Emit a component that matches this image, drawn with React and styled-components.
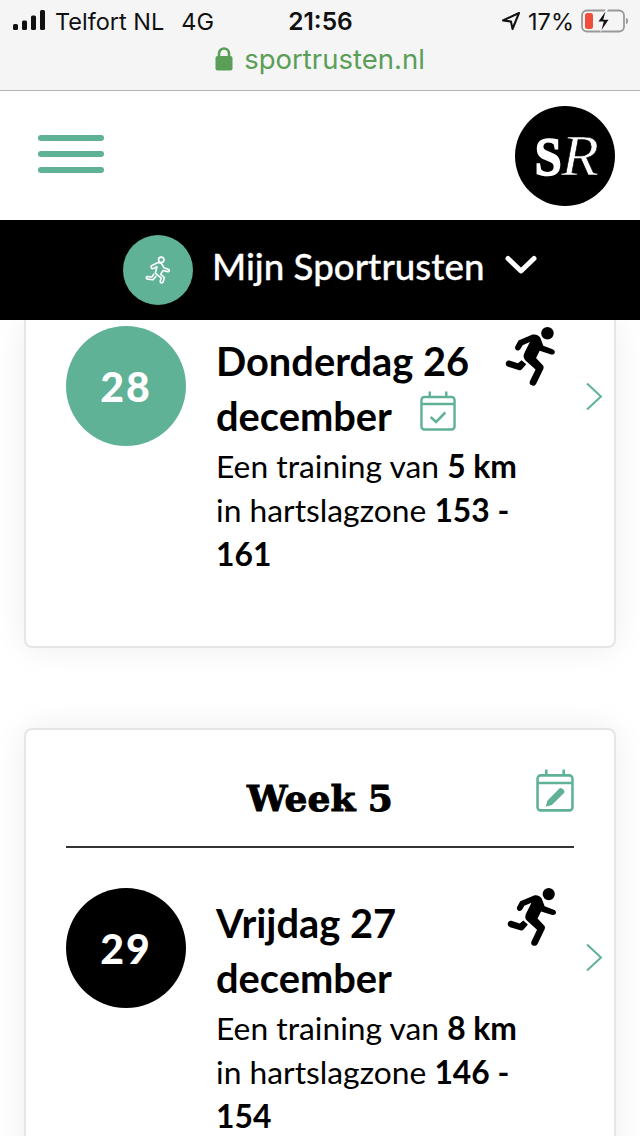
import styled, { createGlobalStyle } from "styled-components";

const GlobalStyle = createGlobalStyle`
  html, body { margin: 0; padding: 0; background: #fff; }
  * { box-sizing: border-box; }
`;

const GREEN = "#60b297";

const Page = styled.div`
  width: 640px;
  height: 1136px;
  overflow: hidden;
  display: flex;
  flex-direction: column;
  font-family: Lato, "Liberation Sans", sans-serif;
  color: #000;
`;

const Chrome = styled.div`
  height: 91px;
  flex: none;
  background: #f5f5f5;
  border-bottom: 1px solid #b4b4b4;
  font-family: Inter, "Liberation Sans", Arial, sans-serif;
`;

const StatusBar = styled.div`
  height: 42px;
  padding: 0 12px 0 13px;
  display: grid;
  grid-template-columns: 1fr auto 1fr;
  align-items: center;
  font-size: 23.5px;
  color: #111;
`;

const StatusLeft = styled.div`
  display: flex;
  align-items: center;
  gap: 8px;
`;

const Carrier = styled.span`
  margin-right: 9px;
`;

const Clock = styled.span`
  font-weight: 600;
  font-size: 24.500px;
`;

const StatusRight = styled.div`
  display: flex;
  align-items: center;
  justify-content: flex-end;
  gap: 7px;
`;

const Address = styled.div`
  display: flex;
  justify-content: center;
  align-items: center;
  gap: 11px;
  font-size: 27.500px;
  line-height: 34px;
  color: #5a9e58;
`;

const Header = styled.header`
  height: 129px;
  flex: none;
  padding: 15px 25px 0 38px;
  display: flex;
  justify-content: space-between;
  align-items: flex-start;
`;

const Burger = styled.div`
  margin-top: 29px;
  width: 66px;
  display: flex;
  flex-direction: column;
  gap: 10px;
`;

const BurgerLine = styled.span`
  height: 6px;
  border-radius: 3px;
  background: ${GREEN};
`;

const Logo = styled.div`
  width: 100px;
  height: 100px;
  border-radius: 50%;
  background: #000;
  color: #fff;
  display: flex;
  align-items: center;
  justify-content: center;
  line-height: 1;
`;

const LogoS = styled.span`
  display: inline-block;
  font-family: "Liberation Serif", serif;
  font-weight: 700;
  font-size: 55px;
  -webkit-text-stroke: 1.6px #fff;
  transform: scaleX(0.88);
`;

const LogoR = styled.span`
  display: inline-block;
  font-family: "Liberation Serif", serif;
  font-style: italic;
  font-size: 56px;
  margin-left: 0;
  -webkit-text-stroke: 0.6px #000;
  transform: scaleX(1.1);
`;

const MenuBar = styled.nav`
  height: 100px;
  flex: none;
  background: #000;
  color: #fff;
  display: flex;
  align-items: center;
  padding-left: 123px;
  position: relative;
  z-index: 1;
`;

const MenuBadge = styled.div`
  width: 70px;
  height: 70px;
  border-radius: 50%;
  background: ${GREEN};
  display: flex;
  align-items: center;
  justify-content: center;
  margin-right: 19px;
`;

const MenuTitle = styled.span`
  font-size: 36.700px;
  font-weight: 500;
  margin: 0 21px 8px 0;
  -webkit-text-stroke: 0.3px #fff;
`;

const MenuChevron = styled.span`
  display: flex;
  margin-bottom: 10px;
`;

const Feed = styled.main`
  flex: 1;
  overflow: hidden;
  padding: 0 24px;
  display: flex;
  flex-direction: column;
  gap: 80px;
  background: #fff;
`;

const Card = styled.section`
  flex: none;
  background: #fff;
  border: 2px solid #e6e6e6;
  border-top: ${(p) => (p.$cut ? "none" : "2px solid #e6e6e6")};
  border-radius: ${(p) => (p.$cut ? "0 0 8px 8px" : "8px")};
  box-shadow: 0 0 34px rgba(0, 0, 0, 0.07);
  padding: ${(p) => (p.$cut ? "6px 0 0" : "0 0 60px")};
  height: ${(p) => (p.$cut ? "328px" : "auto")};
`;

const WeekHead = styled.div`
  margin: 0 40px;
  height: 118px;
  border-bottom: 2px solid #333;
  display: flex;
  align-items: center;
  justify-content: center;
  position: relative;
`;

const WeekTitle = styled.h2`
  margin: 19px 0 0;
  font-family: "DejaVu Serif", "Liberation Serif", serif;
  font-size: 36px;
  font-weight: 700;
  line-height: 1;
  -webkit-text-stroke: 1px #000;
`;

const WeekEdit = styled.div`
  position: absolute;
  right: 0;
  top: 39px;
  display: flex;
`;

const Day = styled.div`
  display: grid;
  grid-template-columns: 120px 1fr;
  column-gap: 30px;
  padding: 0 0 0 40px;
  position: relative;
  margin-top: ${(p) => (p.$spaced ? "40px" : "0")};
`;

const DayCircle = styled.div`
  width: 120px;
  height: 120px;
  border-radius: 50%;
  background: ${(p) => (p.$dark ? "#000" : GREEN)};
  color: #fff;
  display: flex;
  align-items: center;
  justify-content: center;
  font-size: 41px;
  font-weight: 900;
  letter-spacing: 2px;
`;

const DayText = styled.div`
  width: 310px;
  padding-top: 7px;
`;

const DayTitle = styled.h3`
  margin: 0;
  font-size: 39.800px;
  line-height: 55px;
  font-weight: 700;
`;

const TitleIcon = styled.span`
  display: inline-block;
  vertical-align: 0;
  margin: -12px 0 -12px 28px;
  line-height: 0;
`;

const DayBody = styled.p`
  margin: 1px 0 0;
  font-size: 31.800px;
  line-height: 44px;
  width: 310px;
`;

const Runner = styled.div`
  position: absolute;
  left: ${(p) => p.$left}px;
  top: ${(p) => p.$top}px;
  line-height: 0;
`;

const Chevron = styled.div`
  position: absolute;
  right: 11px;
  top: ${(p) => p.$top}px;
  line-height: 0;
`;

const SignalIcon = () => (
  <svg width="34" height="22" viewBox="0 0 34 22">
    <rect x="0" y="14" width="5" height="6" rx="1.5" fill="#111" />
    <rect x="9" y="10.5" width="5" height="9.5" rx="1.5" fill="#111" />
    <rect x="18" y="5.5" width="5" height="14.5" rx="1.5" fill="#111" />
    <rect x="27" y="0" width="5" height="20" rx="1.5" fill="#111" />
  </svg>
);

const LocationIcon = () => (
  <svg width="20" height="20" viewBox="0 0 20 20">
    <path d="M18 2 L2 9.5 L10 10.5 L11.5 18 Z" fill="none" stroke="#111" strokeWidth="2" strokeLinejoin="round" />
  </svg>
);

const BatteryIcon = () => (
  <svg width="47" height="24" viewBox="0 0 47 24">
    <rect x="1" y="1.5" width="42" height="21" rx="5" fill="none" stroke="#999" strokeWidth="1.8" />
    <rect x="4" y="4" width="8" height="16" rx="2.5" fill="#ee4e3a" />
    <path d="M45 9 a2 3 0 0 1 0 6 Z" fill="#999" />
    <path d="M25 0 L16 13 H22 L19 24 L29 10 H23 L27 0 Z" fill="#f5f5f5" />
    <path d="M24.500 2.500 L17.500 12.500 H22.800 L20.500 21 L27.500 10.800 H22.200 Z" fill="#111" />
  </svg>
);

const LockIcon = () => (
  <svg width="18" height="26" viewBox="0 0 18 26">
    <path d="M4 11 V7.500 a5 5 0 0 1 10 0 V11" fill="none" stroke="#5a9e58" strokeWidth="2.600" />
    <rect x="0.500" y="10" width="17" height="14.500" rx="2" fill="#5a9e58" />
  </svg>
);

const Chevy = () => (
  <svg width="32" height="20" viewBox="0 0 32 20">
    <path d="M3 3.500 L16 16 L29 3.500" fill="none" stroke="#fff" strokeWidth="5" strokeLinecap="round" strokeLinejoin="round" />
  </svg>
);

const ChevronRight = () => (
  <svg width="18" height="30" viewBox="0 0 18 30">
    <path d="M2 1.500 L16 14.500 L2 27.500" fill="none" stroke={GREEN} strokeWidth="2" />
  </svg>
);

// solid running figure
const RunnerIcon = ({ size = 58 }) => (
  <svg width={size} height={size * 1.07} viewBox="0 0 56 60" fill="#000">
    <circle cx="41" cy="7" r="6" />
    <path d="M13 14 L26 8.500 C29 7.500 32 8.500 34 11 L37 19 L46 22.500 C50 24 48 28.500 44.500 27.500 L33.500 24 L30 31 L36.500 38 C37.500 39 37.500 40 37 41.500 L30 56 C28 59.500 22.500 57.500 24 53.500 L29.500 42 L19.500 33 C17.500 31 17.500 28.500 19 25.500 L24 15.500 L17 18.500 L15 22 C13 25.500 8.500 23 10 19.500 Z" />
    <path d="M16 33 L20.500 37 L16.500 41.500 C15.500 42.500 14.500 43 13 42.500 L3 39.500 C-1 38 0.500 32 5 33.500 L12.500 36 Z" />
  </svg>
);

const OutlineRunner = () => (
  <svg width="26" height="28" viewBox="0 0 24 26" fill="none" stroke="#fff" strokeWidth="1.500" strokeLinejoin="round" strokeLinecap="round">
    <circle cx="15" cy="3.500" r="2.500" />
    <path d="M6 9 L11 6.500 C13 6 15 6.500 16 8 L17.500 11 L22 12.500 C23 13.500 22 15 21 14.500 L16.500 13.500 L14.500 17 L18 20 L16.500 24.500 C15.500 25.500 14 25 14 23.500 L15 20.500 L9.500 16 L11 10 L8 11.500 C6 12.500 5 10 6 9 Z" />
    <path d="M8 17 L6.500 19.500 L2 19 C0.500 19.500 1 21.500 2.500 21.500 L7.500 22 L10 19" />
  </svg>
);

const CalendarIcon = ({ width = 37, height = 40, children }) => (
  <svg width={width} height={height} viewBox="0 0 37 40" preserveAspectRatio="none" fill="none" stroke={GREEN} strokeWidth="2.500">
    <rect x="1.500" y="6" width="34" height="32.500" rx="3" />
    <path d="M1.500 13 H35.500 M10 0.500 V6 M27 0.500 V6" />
    {children}
  </svg>
);

export default function App() {
  return (
    <Page>
      <GlobalStyle />
      <Chrome>
        <StatusBar>
          <StatusLeft>
            <SignalIcon />
            <Carrier>Telfort NL</Carrier>
            <span>4G</span>
          </StatusLeft>
          <Clock>21:56</Clock>
          <StatusRight>
            <LocationIcon />
            <span>17%</span>
            <BatteryIcon />
          </StatusRight>
        </StatusBar>
        <Address>
          <LockIcon />
          <span>sportrusten.nl</span>
        </Address>
      </Chrome>

      <Header>
        <Burger>
          <BurgerLine />
          <BurgerLine />
          <BurgerLine />
        </Burger>
        <Logo>
          <LogoS>S</LogoS>
          <LogoR>R</LogoR>
        </Logo>
      </Header>

      <MenuBar>
        <MenuBadge>
          <OutlineRunner />
        </MenuBadge>
        <MenuTitle>Mijn Sportrusten</MenuTitle>
        <MenuChevron>
          <Chevy />
        </MenuChevron>
      </MenuBar>

      <Feed>
        <Card $cut>
          <Day>
            <DayCircle>28</DayCircle>
            <DayText>
              <DayTitle>
                Donderdag 26 december
                <TitleIcon>
                  <CalendarIcon width={36}>
                    <path d="M11 26 L16.500 31 L26 21.500" strokeWidth="2.600" />
                  </CalendarIcon>
                </TitleIcon>
              </DayTitle>
              <DayBody>
                Een training van <b>5 km</b> in hartslagzone <b>153 - 161</b>
              </DayBody>
            </DayText>
            <Runner $left={479} $top={0}>
              <RunnerIcon />
            </Runner>
            <Chevron $top={56}>
              <ChevronRight />
            </Chevron>
          </Day>
        </Card>

        <Card>
          <WeekHead>
            <WeekTitle>Week 5</WeekTitle>
            <WeekEdit>
              <CalendarIcon width={38} height={43}>
                <path d="M9.500 35 L11 29.500 L23 18 C24.500 16.500 29 20.500 27.500 22 L15.500 33.500 Z" fill={GREEN} stroke="none" />
              </CalendarIcon>
            </WeekEdit>
          </WeekHead>
          <Day $spaced>
            <DayCircle $dark>29</DayCircle>
            <DayText>
              <DayTitle>Vrijdag 27 december</DayTitle>
              <DayBody>
                Een training van <b>8 km</b> in hartslagzone <b>146 - 154</b>
              </DayBody>
            </DayText>
            <Runner $left={481} $top={-1}>
              <RunnerIcon size={57} />
            </Runner>
            <Chevron $top={55}>
              <ChevronRight />
            </Chevron>
          </Day>
        </Card>
      </Feed>
    </Page>
  );
}
